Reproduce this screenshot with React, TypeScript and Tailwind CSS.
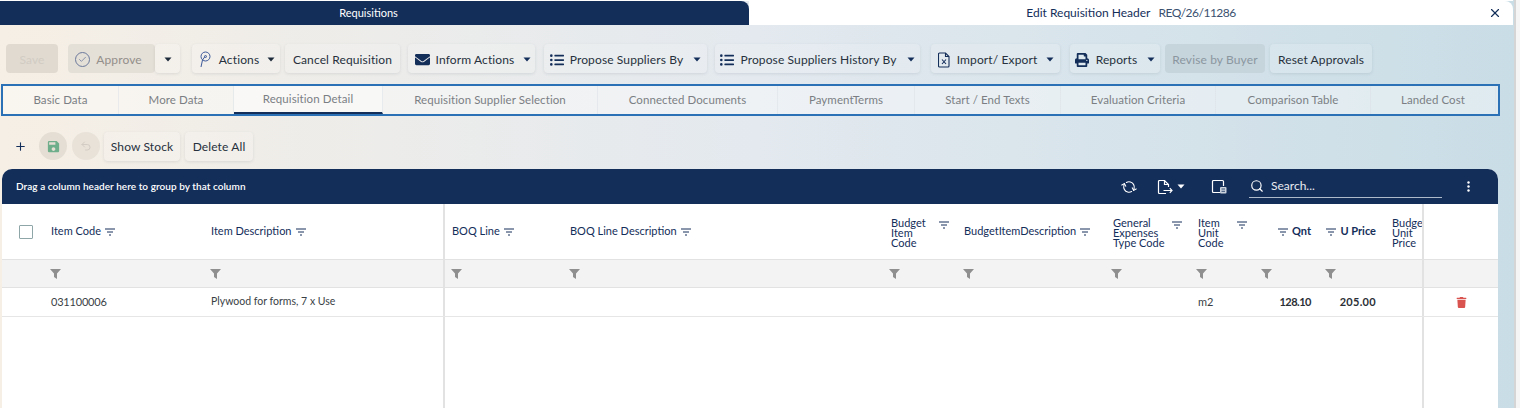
import { Check, Plus, RefreshCw, Search, Undo2, X } from "lucide-react";
import { FaEnvelope, FaListUl, FaPrint, FaTrash } from "react-icons/fa";
import { MdSave } from "react-icons/md";
import type { ReactNode } from "react";

const font = { fontFamily: '"Lato", "Open Sans", sans-serif' };

function Caret({ className = "text-[#1c2a3a]" }: { className?: string }) {
  return (
    <svg width="8" height="5" viewBox="0 0 8 5" className={className}>
      <path d="M0.5 0.5h7L4 4.5z" fill="currentColor" />
    </svg>
  );
}

function SortLines() {
  return (
    <svg width="10" height="8" viewBox="0 0 10 8" className="shrink-0 text-[#142e5a]">
      <path d="M0 1h10M2 4h6M4 7h2" stroke="currentColor" strokeWidth="1" />
    </svg>
  );
}

function Funnel() {
  return (
    <svg width="11" height="10" viewBox="0 0 11 10" className="text-[#8f8f8f]">
      <path d="M0 0h11L7 4.5V10L4 8V4.5z" fill="currentColor" />
    </svg>
  );
}

function PinIcon() {
  return (
    <svg width="12" height="17" viewBox="0 0 12 17" fill="none" stroke="#3d5a9a" strokeWidth="1">
      <circle cx="6.5" cy="5.5" r="4.5" />
      <circle cx="6.5" cy="5.5" r="1" />
      <path d="M6 5.5 3.5 9 2 16" />
    </svg>
  );
}

function ExcelFile() {
  return (
    <svg width="12" height="16" viewBox="0 0 12 16" fill="none" stroke="#142e5a" strokeWidth="1.1">
      <path d="M1.5 1h6l3.5 3.5V14a1 1 0 0 1-1 1H1.5a1 1 0 0 1-1-1V2a1 1 0 0 1 1-1z" />
      <path d="M7.5 1v3.5H11M4 7.5l4 4.5M8 7.5 4 12" />
    </svg>
  );
}

function ExportFile() {
  return (
    <svg width="16" height="16" viewBox="0 0 16 16" fill="none" stroke="white" strokeWidth="1.2">
      <path d="M9 14.5H2.5a1 1 0 0 1-1-1v-11a1 1 0 0 1 1-1h5l4 4V8" />
      <path d="M7.5 1.5v4h4M6.5 11.5h8.5M12.8 9.2l2.2 2.3-2.2 2.3" />
    </svg>
  );
}

function ColumnChooser() {
  return (
    <svg width="16" height="15" viewBox="0 0 16 15" fill="none">
      <path d="M9 13.5H2.5a1 1 0 0 1-1-1v-10a1 1 0 0 1 1-1h9a1 1 0 0 1 1 1V7" stroke="white" strokeWidth="1.2" />
      <rect x="9" y="8" width="6.5" height="6.5" rx="1" fill="#c9d1dd" />
      <path d="M10.5 10h3.5M10.5 12.3h3.5" stroke="#142e5a" strokeWidth="0.8" />
    </svg>
  );
}

function ToolButton({
  children,
  className = "",
  tone = "bg-white/15 text-[#27313d] shadow-[0_1px_3px_rgba(60,70,90,0.12)]",
}: {
  children: ReactNode;
  className?: string;
  tone?: string;
}) {
  return (
    <button
      className={`flex h-[29px] items-center justify-center whitespace-nowrap rounded-[4px] pt-[2px] text-[12px] tracking-[0.12px] ${tone} ${className}`}
    >
      {children}
    </button>
  );
}

const tabs = [
  { label: "Basic Data", width: "w-[116px]" },
  { label: "More Data", width: "w-[115px]" },
  { label: "Requisition Detail", width: "w-[149px]", active: true },
  { label: "Requisition Supplier Selection", width: "w-[215px]" },
  { label: "Connected Documents", width: "w-[180px]" },
  { label: "PaymentTerms", width: "w-[137px]" },
  { label: "Start / End Texts", width: "w-[146px]" },
  { label: "Evaluation Criteria", width: "w-[155px]" },
  { label: "Comparison Table", width: "w-[155px]" },
  { label: "Landed Cost", width: "w-[125px]" },
];

const columns = [
  { width: "w-[42px]", filter: false },
  { width: "w-[160px]", label: "Item Code", filter: true },
  { width: "w-[241px] border-r-2 border-[#e2e2e2]", label: "Item Description", filter: true },
  { width: "w-[118px]", label: "BOQ Line", filter: true },
  { width: "w-[320px]", label: "BOQ Line Description", filter: true },
  { width: "w-[74px]", label: "Budget Item Code", wrap: true, filter: true },
  { width: "w-[148px]", label: "BudgetItemDescription", filter: true },
  { width: "w-[85px]", label: "General Expenses Type Code", wrap: true, filter: true },
  { width: "w-[65px]", label: "Item Unit Code", wrap: true, filter: true },
  { width: "w-[64px]", label: "Qnt", right: true, filter: true },
  { width: "w-[65px]", label: "U Price", right: true, filter: true },
  { width: "w-[38px]", label: "Budget Unit Price", clip: true, filter: false },
  { width: "flex-1 border-l-2 border-[#e2e2e2]", filter: false },
];

function HeaderCell({ col }: { col: (typeof columns)[number] }) {
  if (!col.label) {
    return <div className={`${col.width} flex items-center justify-center`} />;
  }
  if (col.wrap) {
    return (
      <div className={`${col.width} flex items-center justify-between pl-2 pr-[8px]`}>
        <span className="w-[56px] pt-[2px] text-[11px] leading-[10px] text-[#142e5a]">{col.label}</span>
        <span className="mb-[14px]">
          <SortLines />
        </span>
      </div>
    );
  }
  if (col.clip) {
    return (
      <div className={`${col.width} flex items-center overflow-hidden pl-2`}>
        <span className="w-[36px] shrink-0 pt-[2px] text-[11px] leading-[10px] text-[#142e5a]">{col.label}</span>
      </div>
    );
  }
  if (col.right) {
    return (
      <div className={`${col.width} flex items-center justify-end gap-1 pr-2`}>
        <SortLines />
        <span className="text-[11px] font-bold text-[#142e5a]">{col.label}</span>
      </div>
    );
  }
  return (
    <div className={`${col.width} flex items-center gap-1 pl-[7px]`}>
      <span className="text-[11px] text-[#142e5a]">{col.label}</span>
      <SortLines />
    </div>
  );
}

export default function App() {
  return (
    <div
      style={font}
      className="flex h-[408px] w-[1520px] overflow-hidden bg-gradient-to-r from-[#f6efe5] via-[#e3e9ef] to-[#c9dde6]"
    >
      <div className="flex w-[1513px] flex-col">
        {/* window tabs */}
        <div className="flex h-[25px] border-t border-white">
          <div className="flex w-[749px] items-center justify-center rounded-tr-[8px] bg-[#142e5a] text-[11px] text-white">
            <span className="mr-[12px]">Requisitions</span>
          </div>
          <div className="relative flex flex-1 items-center justify-center rounded-tr-[8px] bg-white text-[12px] text-[#142e5a]">
            <span>Edit Requisition Header</span>
            <span className="ml-[8px] tracking-[-0.5px] text-[#3b5170]">REQ/26/11286</span>
            <X size={14} strokeWidth={2} className="absolute right-[11px] top-[5px] text-[#142e5a]" />
          </div>
        </div>

        {/* actions */}
        <div className="mt-[19px] flex items-center pl-[6px]">
          <ToolButton className="mr-[10px] w-[52px]" tone="bg-[#e0dad1] text-[#d2ccc3]">
            Save
          </ToolButton>
          <ToolButton className="w-[87px] gap-[6px] pr-[6px]" tone="bg-[#e4dfd7] text-[#938f8a]">
            <span className="flex size-[15px] items-center justify-center rounded-full border border-[#6c7a9c]">
              <Check size={9} className="text-[#6c7a9c]" />
            </span>
            Approve
          </ToolButton>
          <ToolButton className="mr-[12px] w-[25px]">
            <Caret />
          </ToolButton>
          <ToolButton className="mr-[5px] w-[88px] gap-[8px] pl-[2px]">
            <PinIcon />
            Actions
            <Caret />
          </ToolButton>
          <ToolButton className="mr-[8px] w-[115px]">Cancel Requisition</ToolButton>
          <ToolButton className="mr-[9px] w-[127px] gap-[6px] pl-[3px]">
            <FaEnvelope size={15} className="text-[#142e5a]" />
            Inform Actions
            <Caret className="ml-[3px] text-[#142e5a]" />
          </ToolButton>
          <ToolButton className="mr-[8px] w-[163px] gap-[6px]">
            <FaListUl size={14} className="text-[#142e5a]" />
            Propose Suppliers By
            <Caret className="ml-[4px] text-[#142e5a]" />
          </ToolButton>
          <ToolButton className="mr-[11px] w-[205px] gap-[6px]">
            <FaListUl size={14} className="text-[#142e5a]" />
            Propose Suppliers History By
            <Caret className="ml-[4px] text-[#142e5a]" />
          </ToolButton>
          <ToolButton className="mr-[10px] w-[129px] gap-[7px] pl-[1px]">
            <ExcelFile />
            Import/ Export
            <Caret className="ml-[2px] text-[#142e5a]" />
          </ToolButton>
          <ToolButton className="mr-[5px] w-[90px] gap-[7px]">
            <FaPrint size={14} className="text-[#142e5a]" />
            Reports
            <Caret className="ml-[3px] text-[#142e5a]" />
          </ToolButton>
          <ToolButton className="mr-[5px] w-[100px]" tone="bg-[#c6d4dc] text-[#8b979f]">
            Revise by Buyer
          </ToolButton>
          <ToolButton className="w-[102px]">Reset Approvals</ToolButton>
        </div>

        {/* tabs */}
        <div className="ml-px mt-[11px] flex h-[32px] w-[1499px] border-2 border-[#2a72b5] bg-white/40">
          {tabs.map((tab) => (
            <div
              key={tab.label}
              className={`flex items-center justify-center border-r border-[#dde3e8]/60 text-[11.5px] tracking-[0.08px] text-[#7b7f84] ${tab.width} ${
                tab.active ? "border-b-2 border-b-[#142e5a] bg-white/40" : ""
              }`}
            >
              {tab.label}
            </div>
          ))}
        </div>

        {/* detail toolbar */}
        <div className="mt-[15px] flex h-[30px] items-center pl-[14px]">
          <Plus size={13} strokeWidth={2} className="mr-[12px] text-[#142e5a]" />
          <div className="mr-[5px] flex size-[28px] items-center justify-center rounded-full bg-[#e4ded4]">
            <MdSave size={15} className="text-[#6fae8a]" />
          </div>
          <div className="mr-[4px] flex size-[28px] items-center justify-center rounded-full bg-[#e8e2d9]">
            <Undo2 size={12} className="text-[#d2ccc4]" />
          </div>
          <ToolButton className="mr-[5px] w-[76px]">Show Stock</ToolButton>
          <ToolButton className="w-[68px]">Delete All</ToolButton>
        </div>

        {/* grid */}
        <div className="ml-[2px] mt-2 flex w-[1496px] flex-1 flex-col overflow-hidden rounded-t-[10px] bg-white">
          <div className="flex h-[35px] items-center bg-[#142e5a] pl-[14px] pr-[28px] text-white">
            <span className="flex-1 text-[10px] font-semibold tracking-[0.05px]">
              Drag a column header here to group by that column
            </span>
            <RefreshCw size={14} strokeWidth={1.8} className="mr-[21px] rotate-[60deg]" />
            <ExportFile />
            <Caret className="ml-[4px] mr-[26px] text-white" />
            <ColumnChooser />
            <div className="ml-[22px] mr-[25px] flex h-[23px] w-[193px] items-center gap-[7px] border-b border-[#aeb9c9] pl-[1px]">
              <Search size={14} strokeWidth={2} />
              <span className="text-[12px] text-[#e8ebf0]">Search...</span>
            </div>
            <svg width="3" height="11" viewBox="0 0 3 11" fill="white">
              <circle cx="1.5" cy="1.5" r="1.2" />
              <circle cx="1.5" cy="5.5" r="1.2" />
              <circle cx="1.5" cy="9.5" r="1.2" />
            </svg>
          </div>

          <div className="flex h-[56px] border-b border-[#e2e2e2]">
            {columns.map((col, i) =>
              i === 0 ? (
                <div key={i} className="flex w-[42px] items-center pl-[17px]">
                  <span className="size-[14px] rounded-[1px] border border-[#8fa6a8]" />
                </div>
              ) : (
                <HeaderCell key={i} col={col} />
              ),
            )}
          </div>

          <div className="flex h-[28px] border-b border-[#e2e2e2] bg-[#f3f3f3]">
            {columns.map((col, i) => (
              <div key={i} className={`flex items-center pl-[6px] ${col.width}`}>
                {col.filter && <Funnel />}
              </div>
            ))}
          </div>

          <div className="flex h-[29px] border-b border-[#e6e6e6] text-[10.5px] text-[#3a3f46]">
            <div className="w-[42px]" />
            <div className="flex w-[160px] items-center pl-[7px] text-[11px] tracking-[-0.2px]">031100006</div>
            <div className="flex w-[241px] items-center border-r-2 border-[#e2e2e2] pl-[7px]">
              Plywood for forms, 7 x Use
            </div>
            <div className="w-[118px]" />
            <div className="w-[320px]" />
            <div className="w-[74px]" />
            <div className="w-[148px]" />
            <div className="w-[85px]" />
            <div className="flex w-[65px] items-center pl-2 text-[11px]">m2</div>
            <div className="flex w-[64px] items-center justify-end pr-2 text-[11px] font-bold tracking-[-0.5px] text-[#2b2f36]">
              128.10
            </div>
            <div className="flex w-[65px] items-center justify-end pr-2 text-[11px] font-bold tracking-[0.3px] text-[#2b2f36]">
              205.00
            </div>
            <div className="w-[38px]" />
            <div className="flex flex-1 items-center justify-center border-l-2 border-[#e2e2e2]">
              <FaTrash size={11} className="text-[#d9534f]" />
            </div>
          </div>

          <div className="flex flex-1">
            <div className="w-[443px] border-r-2 border-[#e2e2e2]" />
            <div className="w-[979px] border-r-2 border-[#e2e2e2]" />
          </div>
        </div>
      </div>

      <div className="ml-[1px] w-[2px] bg-[#d5d5d5]" />
      <div className="flex-1 bg-[#f5f5f5]" />
    </div>
  );
}
